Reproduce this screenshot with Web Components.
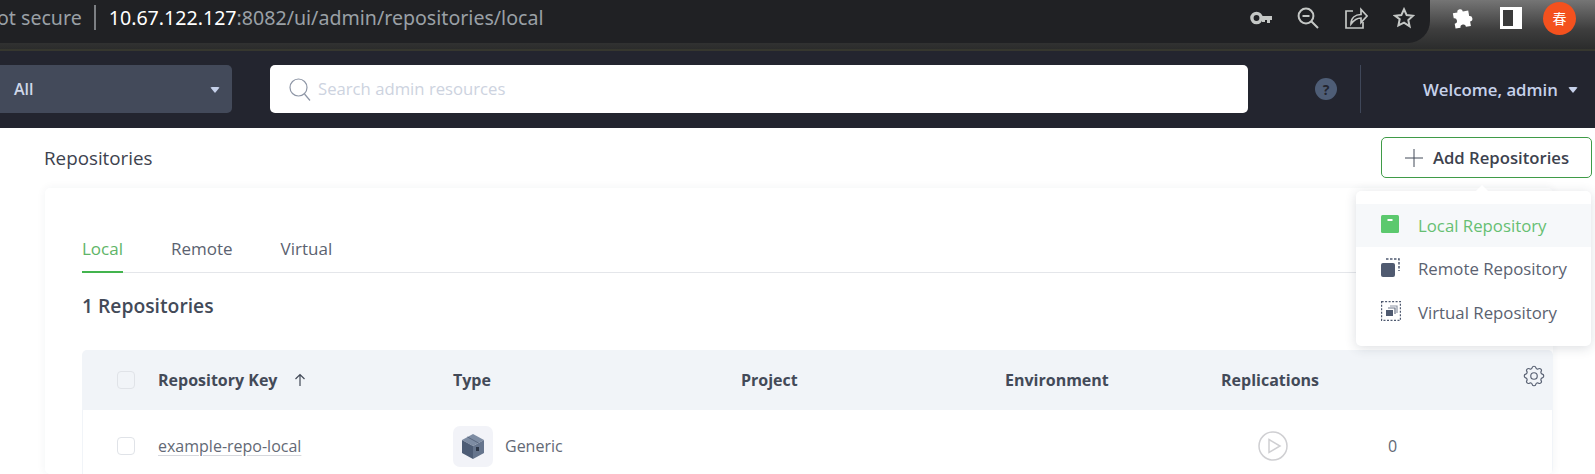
<!DOCTYPE html>
<html>
<head>
<meta charset="utf-8">
<style>
  html, body { margin: 0; height: 100%; overflow: hidden; background: #fff; font-family: "Open Sans", sans-serif; }
</style>
</head>
<body>
<browser-bar></browser-bar>
<app-header></app-header>
<repo-page></repo-page>

<script>
class BrowserBar extends HTMLElement {
  connectedCallback() {
    this.attachShadow({ mode: 'open' });
    this.shadowRoot.innerHTML = `
      <style>
        :host {
          display: flex;
          height: 51px;
          box-sizing: border-box;
          background: linear-gradient(180deg, #757575 0%, #3e3e3e 60%, #2b2c2c 100%);
          border-bottom: 2px solid #36372f;
          font-family: "Noto Sans", sans-serif;
        }
        .pill {
          flex: 0 0 1430px;
          height: 43px;
          background: #202124;
          border-bottom-right-radius: 22px;
          display: flex;
          align-items: center;
          overflow: hidden;
          box-sizing: border-box;
          padding: 0 15px 8px 0;
        }
        .url {
          flex: 1;
          display: flex;
          align-items: center;
          font-size: 19.600px;
          color: #9aa0a6;
          white-space: nowrap;
          margin-left: -3px;
        }
        .sep { width: 2px; height: 25px; background: #7c7f83; margin: 0 13px 0 12px; }
        .host { color: #fff; }
        .icons { display: flex; align-items: center; gap: 25px; }
        .tools { flex: 1; display: flex; align-items: center; padding: 0 0 7px 22px; gap: 26px; height: 36px; }
        .avatar {
          width: 33px; height: 33px; border-radius: 50%; background: #f4511e; color: #fff;
          font: 14px "Noto Sans CJK SC", sans-serif;
          display: flex; align-items: center; justify-content: center;
          margin-left: -5px;
        }
        svg { display: block; }
      </style>
      <div class="pill">
        <div class="url">
          <span>ot secure</span><span class="sep"></span><span><span class="host">10.67.122.127</span>:8082/ui/admin/repositories/local</span>
        </div>
        <div class="icons">
          <svg width="22" height="14" viewBox="0 0 22 14"><circle cx="6.5" cy="7" r="4.6" fill="none" stroke="#c4c7c5" stroke-width="3.4"/><path d="M10 5h12v4h-2v3h-3V9h-2v2h-3V9h-2z" fill="#c4c7c5"/></svg>
          <svg width="22" height="22" viewBox="0 0 22 22" fill="none" stroke="#c4c7c5" stroke-width="2"><circle cx="9" cy="9" r="7.4"/><path d="M14.5 14.5 21 21M5.5 9h7"/></svg>
          <svg width="24" height="22" viewBox="0 0 24 22" fill="none" stroke="#c4c7c5" stroke-width="1.7"><path d="M9 4H2v17h17v-6"/><path d="M7 17c0-6 4-9.500 10-9.500V2.500L23 9l-6 6.500v-4.500c-4 0-7 2-10 6z"/></svg>
          <svg width="22" height="22" viewBox="0 0 24 24" fill="none" stroke="#c4c7c5" stroke-width="2.200"><path d="M12 2.500l2.900 6.300 6.900.8-5.100 4.700 1.400 6.800L12 17l-6.100 3.100 1.400-6.800L2.200 9.600l6.900-.8z"/></svg>
        </div>
      </div>
      <div class="tools">
        <svg width="22" height="22" viewBox="0 0 24 24" fill="#fff"><path d="M10 2a3 3 0 0 1 3 3h6v6a3 3 0 1 1 0 6v5h-5.500a3 3 0 0 0-6 0H2v-5.500a3 3 0 0 0 0-6V5h5a3 3 0 0 1 3-3z" transform="rotate(-10 12 12)"/></svg>
        <svg width="22" height="22" viewBox="0 0 22 22"><path d="M0 0h22v22H0z" fill="#fff"/><path d="M3 3h10v16H3z" fill="#3b3b3b"/></svg>
        <span class="avatar">春</span>
      </div>
    `;
  }
}

class AppHeader extends HTMLElement {
  connectedCallback() {
    this.attachShadow({ mode: 'open' });
    this.shadowRoot.innerHTML = `
      <style>
        :host {
          display: flex;
          align-items: center;
          height: 77px;
          box-sizing: border-box;
          padding-bottom: 1px;
          background: #23252f;
          font-family: "Open Sans", sans-serif;
        }
        .scope {
          flex: 0 0 232px;
          height: 48px;
          box-sizing: border-box;
          padding: 0 12px 0 14px;
          background: #434a5a;
          border-radius: 0 5px 5px 0;
          display: flex;
          align-items: center;
          justify-content: space-between;
          color: #cfd7e8;
          font-weight: 600;
          font-size: 16px;
        }
        .search {
          flex: 0 0 978px;
          margin-left: 38px;
          height: 48px;
          box-sizing: border-box;
          background: #fff;
          border-radius: 5px;
          display: flex;
          align-items: center;
          padding-left: 19px;
          gap: 8px;
          color: #cdd3e0;
          font-size: 16.700px;
        }
        .search span { margin-top: -2px; margin-left: -1px; }
        .help {
          margin-left: 67px;
          width: 22px; height: 22px;
          border-radius: 50%;
          background: #4e5d76;
          color: #23252f;
          font-size: 14px;
          font-weight: 700;
          display: flex; align-items: center; justify-content: center;
        }
        .rule { width: 1px; height: 48px; background: #3f4759; margin-left: 23px; }
        .welcome {
          margin-left: 62px;
          color: #c6d1ea;
          font-size: 16.800px;
          font-weight: 600;
          white-space: nowrap;
          display: flex;
          align-items: center;
          gap: 10px;
        }
        .caret { width: 0; height: 0; border-left: 5px solid transparent; border-right: 5px solid transparent; border-top: 6px solid #c6d1ea; border-radius: 2px; margin-top: 2px; }
      </style>
      <div class="scope"><span>All</span><span class="caret"></span></div>
      <div class="search">
        <svg width="22" height="23" viewBox="0 0 22 23" fill="none" stroke="#8e96a6" stroke-width="1.200"><circle cx="9.500" cy="9.500" r="8.500"/><path d="M15.500 16l5.500 6.500"/></svg>
        <span>Search admin resources</span>
      </div>
      <span class="help">?</span>
      <span class="rule"></span>
      <span class="welcome">Welcome, admin<span class="caret"></span></span>
    `;
  }
}

class AddMenu extends HTMLElement {
  connectedCallback() {
    this.attachShadow({ mode: 'open' });
    this.shadowRoot.innerHTML = `
      <style>
        :host {
          display: block;
          position: absolute;
          left: 1356px;
          top: 191px;
          width: 235px;
          height: 155px;
          box-sizing: border-box;
          padding: 12.500px 0;
          background: #fff;
          border-radius: 5px;
          box-shadow: 0 2px 12px rgba(40, 50, 70, .16);
          z-index: 5;
          color: #5b6270;
          font-size: 16.800px;
        }
        :host::before {
          content: "";
          position: absolute;
          left: 121px; top: -4px;
          width: 10px; height: 10px;
          background: #fff;
          transform: rotate(45deg);
        }
        .item { height: 43.500px; display: flex; align-items: center; padding-left: 25px; position: relative; }
        .item.on { background: #f6f8fa; color: #66bf72; }
        svg { display: block; flex: none; margin-top: -3px; }
        .ico { width: 37px; flex: none; }
      </style>
      <div class="item on">
        <span class="ico"><svg width="18" height="18" viewBox="0 0 18 18"><rect width="18" height="18" rx="1.500" fill="#5cc96e"/><rect x="6.500" y="4" width="5" height="2" fill="#fff"/></svg></span>
        <span>Local Repository</span>
      </div>
      <div class="item">
        <span class="ico"><svg width="19" height="19" viewBox="0 0 19 19"><path d="M5 1h13v12" fill="none" stroke="#4f5a70" stroke-width="1.500" stroke-dasharray="2.500 1.500"/><rect y="5" width="14" height="14" rx="2" fill="#4f5a70"/></svg></span>
        <span>Remote Repository</span>
      </div>
      <div class="item">
        <span class="ico"><svg width="20" height="20" viewBox="0 0 20 20"><rect x=".6" y=".6" width="18.800" height="18.800" fill="none" stroke="#4f5a70" stroke-width="1.200" stroke-dasharray="2 1.500"/><path d="M9 5h7v7" fill="none" stroke="#8d95a5" stroke-width="1.200"/><path d="M7 7h7v6" fill="none" stroke="#6b7487" stroke-width="1.200"/><rect x="5" y="9" width="7" height="6" fill="#4f5a70"/></svg></span>
        <span>Virtual Repository</span>
      </div>
    `;
  }
}

class RepoTabs extends HTMLElement {
  connectedCallback() {
    this.attachShadow({ mode: 'open' });
    this.shadowRoot.innerHTML = `
      <style>
        :host { display: flex; gap: 48px; border-bottom: 1px solid #e4e6ea; font-size: 17px; color: #5b6270; }
        span { padding-bottom: 11px; margin-bottom: -1px; line-height: 22px; border-bottom: 2px solid transparent; }
        .on { color: #5fb568; border-bottom-color: #43b44e; }
      </style>
      <span class="on">Local</span><span>Remote</span><span>Virtual</span>
    `;
  }
}

class RepoTable extends HTMLElement {
  connectedCallback() {
    this.attachShadow({ mode: 'open' });
    this.shadowRoot.innerHTML = `
      <style>
        :host { display: block; font-size: 16px; }
        .row {
          display: grid;
          grid-template-columns: 41px 295px 288px 264px 216px 1fr;
          align-items: center;
          padding-left: 35px;
          position: relative;
        }
        .head {
          height: 60px;
          background: #f1f4f8;
          border-radius: 5px 5px 0 0;
          font-weight: 700;
          color: #434a58;
        }
        .body { height: 74px; padding-bottom: 2px; box-sizing: border-box; color: #636975; border-left: 1px solid #f1f4f8; border-right: 1px solid #f1f4f8; padding-left: 34px; }
        .check { width: 18px; height: 18px; box-sizing: border-box; border: 1px solid #e0e3e8; border-radius: 4px; background: #fff; }
        .head .check { background: #f1f4f8; }
        .key { display: flex; align-items: center; gap: 16px; }
        .gear { position: absolute; right: 6px; top: 13px; }
        .link { text-decoration: underline; text-decoration-color: #d6d8dd; text-underline-offset: 3px; }
        .type { display: flex; align-items: center; gap: 12px; }
        .badge { width: 40px; height: 41px; background: #f2f3f8; border-radius: 7px; display: flex; align-items: center; justify-content: center; }
        .repl { display: flex; align-items: center; gap: 100px; padding-left: 37px; white-space: nowrap; }
        svg { display: block; }
      </style>
      <div class="row head">
        <span class="check"></span>
        <span class="key">Repository Key
          <svg width="14" height="14" viewBox="0 0 14 14" fill="none" stroke="#434a58" stroke-width="1.200"><path d="M7 13V1.500M2.500 6 7 1.500 11.500 6"/></svg>
        </span>
        <span>Type</span>
        <span>Project</span>
        <span>Environment</span>
        <span>Replications</span>
        <svg class="gear" width="26" height="26" viewBox="0 0 24 24" fill="none" stroke="#5a6274" stroke-width="1.100"><path d="M10.325 4.317c.426-1.756 2.924-1.756 3.35 0a1.724 1.724 0 002.573 1.066c1.543-.94 3.31.826 2.37 2.37a1.724 1.724 0 001.065 2.572c1.756.426 1.756 2.924 0 3.35a1.724 1.724 0 00-1.066 2.573c.94 1.543-.826 3.31-2.37 2.37a1.724 1.724 0 00-2.572 1.065c-.426 1.756-2.924 1.756-3.35 0a1.724 1.724 0 00-2.573-1.066c-1.543.94-3.31-.826-2.37-2.37a1.724 1.724 0 00-1.065-2.572c-1.756-.426-1.756-2.924 0-3.35a1.724 1.724 0 001.066-2.573c-.94-1.543.826-3.31 2.37-2.37.996.608 2.296.07 2.572-1.065z"/><circle cx="12" cy="12" r="3"/></svg>
      </div>
      <div class="row body">
        <span class="check"></span>
        <span class="link">example-repo-local</span>
        <span class="type">
          <span class="badge">
            <svg width="22" height="25" viewBox="0 0 22 25"><path d="M11 0 22 6 11 12 0 6z" fill="#7d8ca3"/><path d="M0 6l11 6v13L0 19z" fill="#4d5c75"/><path d="M22 6 11 12v13l11-6z" fill="#66758d"/><rect x="14" y="13" width="3" height="4" fill="#2c3648"/><path d="M5.500 3 16.500 9" stroke="#5a6880" stroke-width="1"/></svg>
          </span>
          Generic
        </span>
        <span></span>
        <span></span>
        <span class="repl">
          <svg width="30" height="30" viewBox="0 0 30 30" fill="none" stroke="#cfcfd2" stroke-width="1.500"><circle cx="15" cy="15" r="14"/><path d="M11 8.500 22 15l-11 6.500z"/></svg>
          0
        </span>
      </div>
    `;
  }
}

class RepoPage extends HTMLElement {
  connectedCallback() {
    this.attachShadow({ mode: 'open' });
    this.shadowRoot.innerHTML = `
      <style>
        :host {
          display: block;
          box-sizing: border-box;
          padding: 9px 3px 0 45px;
          color: #434a58;
          font-family: "Open Sans", sans-serif;
        }
        .top { display: flex; align-items: center; justify-content: space-between; height: 41px; }
        h1 { margin: 0 0 0 -1px; font-size: 18.800px; font-weight: 400; color: #3d424e; }
        button {
          width: 211px; height: 41px;
          box-sizing: border-box;
          background: #fff;
          border: 1px solid #3f9b47;
          border-radius: 5px;
          display: flex; align-items: center; justify-content: center; gap: 9px;
          font: 600 16.700px "Open Sans", sans-serif;
          color: #3d424e;
          padding: 0;
        }
        .card {
          margin: 10px 39px 0 0;
          height: 286px;
          overflow: hidden;
          box-sizing: border-box;
          padding: 50px 0 0 37px;
          background: #fff;
          border-radius: 5px;
          box-shadow: 0 0 10px rgba(40, 50, 70, .06);
        }
        h2 { margin: 0; padding: 21px 0 32px; font-size: 19.300px; font-weight: 600; color: #434a58; line-height: 24px; }
      </style>
      <div class="top">
        <h1>Repositories</h1>
        <button>
          <svg width="20" height="20" viewBox="0 0 20 20" stroke="#434a58" stroke-width="1"><path d="M10 1v18M1 10h18"/></svg>
          Add Repositories
        </button>
      </div>
      <div class="card">
        <repo-tabs></repo-tabs>
        <h2>1 Repositories</h2>
        <repo-table></repo-table>
      </div>
      <add-menu></add-menu>
    `;
  }
}

customElements.define('browser-bar', BrowserBar);
customElements.define('app-header', AppHeader);
customElements.define('add-menu', AddMenu);
customElements.define('repo-tabs', RepoTabs);
customElements.define('repo-table', RepoTable);
customElements.define('repo-page', RepoPage);
</script>
</body>
</html>
